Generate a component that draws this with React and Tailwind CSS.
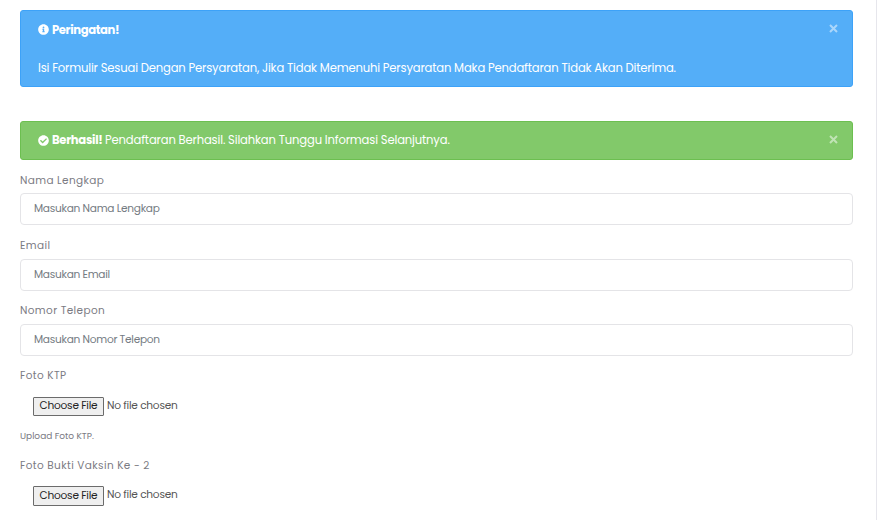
import React from "react";
import { FaInfoCircle, FaCheckCircle } from "react-icons/fa";

function Close() {
  return (
    <button type="button" aria-label="Close" className="mt-[13px] mr-[14px] h-[9px] w-[9px] shrink-0 text-white opacity-50">
      <svg viewBox="0 0 9 9" className="block h-[9px] w-[9px]" fill="none" stroke="currentColor" strokeWidth="2">
        <path d="M1 1L8 8M8 1L1 8" />
      </svg>
    </button>
  );
}

function Label({ children, className = "" }) {
  return <label className={`block h-4 whitespace-nowrap text-[10.5px] leading-4 tracking-[0.38px] text-[#7b7b83] ${className}`}>{children}</label>;
}

function Field({ label, placeholder, className, labelClass = "" }) {
  return (
    <div className={className}>
      <Label className={labelClass}>{label}</Label>
      <input
        type="text"
        placeholder={placeholder}
        className="mt-[5px] block h-8 w-full rounded-[4px] border border-[#e4e4e7] bg-white px-[13px] pb-px text-[10.6px] tracking-[-0.28px] placeholder:text-[#747b82]"
      />
    </div>
  );
}

function FilePicker({ className, buttonClass }) {
  return (
    <div className={`flex items-start pl-[13px] text-[10.6px] tracking-[-0.25px] ${className}`}>
      <button type="button" className={`w-[71px] rounded-[1px] border border-[#6b6b6b] bg-[#efefef] text-center whitespace-nowrap text-[#222] ${buttonClass}`}>
        Choose File
      </button>
      <span className="ml-[3px] leading-[17px] whitespace-nowrap text-[#555]">No file chosen</span>
    </div>
  );
}

export default function App() {
  return (
    <div className="h-[520px] w-[878px] overflow-hidden bg-white font-[Poppins,Inter,sans-serif]">
      <main className="h-full w-[877px] border-r border-[#e6e6ec] pt-[10px] pr-[23px] pl-5">
        <div className="flex h-[77px] justify-between rounded-[3px] border border-[#3da2f8] bg-[#54aef8] pl-[17px] text-white">
          <div className="text-[11.6px] leading-[19px]">
            <div className="mt-[9px] flex h-[19px] items-center">
              <FaInfoCircle className="mr-[3px] mb-px h-[11px] w-[11px]" />
              <strong className="pt-[2px] font-bold tracking-[-0.38px]">Peringatan!</strong>
            </div>
            <p className="mt-[20px] tracking-[-0.172px] whitespace-nowrap">
              Isi Formulir Sesuai Dengan Persyaratan, Jika Tidak Memenuhi Persyaratan Maka Pendaftaran Tidak Akan Diterima.
            </p>
          </div>
          <Close />
        </div>

        <div className="mt-[34px] flex h-[39px] justify-between rounded-[3px] border border-[#6cbf50] bg-[#82c96a] pl-[17px] text-white">
          <div className="mt-[9px] flex h-[19px] items-center text-[11.6px] leading-[19px]">
            <FaCheckCircle className="mr-[3px] mb-px h-[11px] w-[11px]" />
            <strong className="w-[53px] font-bold tracking-[-0.3px]">Berhasil!</strong>
            <span className="tracking-[-0.165px] whitespace-nowrap">Pendaftaran Berhasil. Silahkan Tunggu Informasi Selanjutnya.</span>
          </div>
          <Close />
        </div>

        <Field className="mt-3" label="Nama Lengkap" placeholder="Masukan Nama Lengkap" labelClass="pt-px" />
        <Field className="mt-[13px]" label="Email" placeholder="Masukan Email" />
        <Field className="mt-3" label="Nomor Telepon" placeholder="Masukan Nomor Telepon" />

        <Label className="mt-3">Foto KTP</Label>
        <FilePicker className="mt-[13px] h-[19px]" buttonClass="h-[19px] pb-[2px] leading-[15px]" />
        <small className="mt-3 block h-4 text-[9px] leading-4 text-[#7b7b83]">Upload Foto KTP.</small>

        <Label className="mt-[13px] pt-px">Foto Bukti Vaksin Ke - 2</Label>
        <FilePicker className="mt-[13px] h-5" buttonClass="h-5 pb-px leading-[17px]" />
      </main>
    </div>
  );
}
